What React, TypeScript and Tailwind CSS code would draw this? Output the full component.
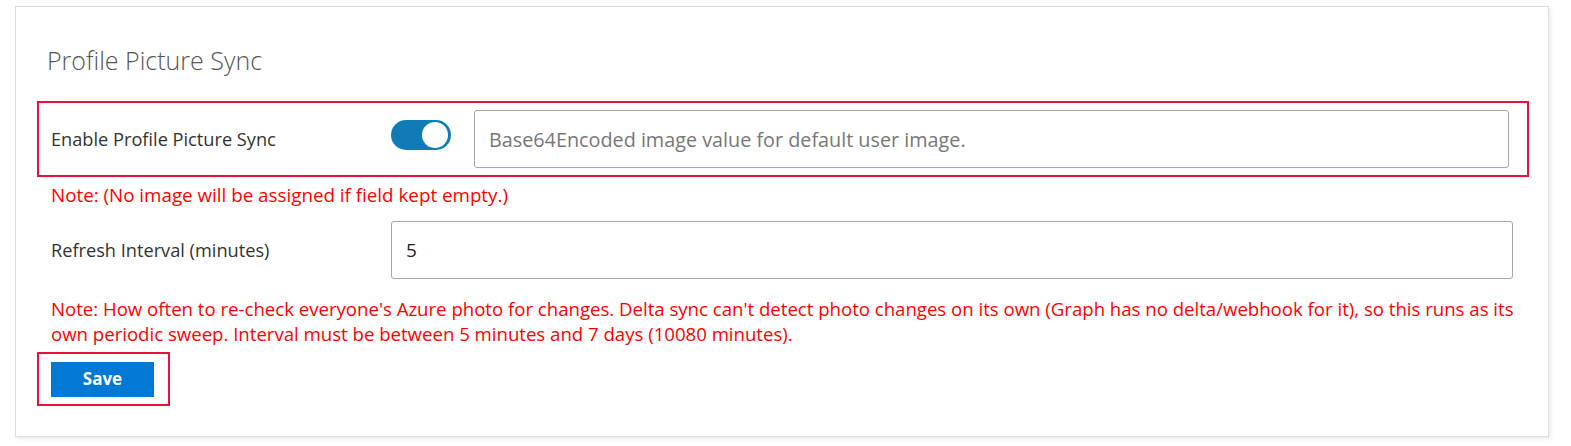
import { useState } from 'react'

const font = { fontFamily: '"Open Sans", "Noto Sans", sans-serif' }

export default function App() {
  const [enabled, setEnabled] = useState(true)
  const [image, setImage] = useState('')
  const [interval, setInterval] = useState('5')

  return (
    <div className="h-[446px] w-full bg-white pl-[15px] pt-[6px]" style={font}>
      <div className="h-[431px] w-[1534px] border border-[#dcdcdc] bg-white shadow-[2px_2px_3px_rgba(0,0,0,0.08)]">
        {/* 제목 */}
        <h2 className="ml-[31px] mt-[37px] text-[25px] font-light leading-[32px] text-[#555]">
          Profile Picture Sync
        </h2>

        {/* 사진 동기화 설정 */}
        <div className="ml-[21px] mt-[25px] flex h-[76px] w-[1492px] items-center border-2 border-[#e8113a] pl-[12px] pr-[18px]">
          <span className="w-[340px] text-[18.2px] leading-[24px] text-[#333]">Enable Profile Picture Sync</span>
          <button
            onClick={() => setEnabled(!enabled)}
            className={`relative mb-[9px] h-[30px] w-[60px] rounded-full ${enabled ? 'bg-[#0f7cb5]' : 'bg-[#ccc]'}`}
          >
            <span
              className={`absolute top-[2px] h-[26px] w-[26px] rounded-full bg-white ${enabled ? 'right-[3px]' : 'left-[3px]'}`}
            ></span>
          </button>
          <input
            value={image}
            onChange={(e) => setImage(e.target.value)}
            placeholder="Base64Encoded image value for default user image."
            className="ml-[23px] h-[58px] flex-1 rounded-[3px] border border-[#a6a6a6] px-[14px] text-[19.8px] text-[#333] outline-none placeholder:text-[#777]"
          />
        </div>
        <p className="ml-[35px] mt-[6px] text-[18.8px] leading-[25px] text-[#f00]">
          Note: (No image will be assigned if field kept empty.)
        </p>

        {/* 새로고침 간격 */}
        <div className="ml-[35px] mt-[13px] flex w-[1462px] items-center">
          <span className="w-[340px] text-[18.2px] leading-[24px] text-[#333]">Refresh Interval (minutes)</span>
          <input
            value={interval}
            onChange={(e) => setInterval(e.target.value)}
            className="h-[58px] flex-1 rounded-[3px] border border-[#a6a6a6] px-[14px] text-[19px] text-[#222] outline-none"
          />
        </div>
        <p className="ml-[35px] mt-[17px] w-[1480px] text-[18.6px] leading-[25px] text-[#f00]">
          Note: How often to re-check everyone's Azure photo for changes. Delta sync can't detect photo changes on its own
          (Graph has no delta/webhook for it), so this runs as its own periodic sweep. Interval must be between 5 minutes
          and 7 days (10080 minutes).
        </p>

        {/* 저장 버튼 */}
        <div className="ml-[21px] mt-[6px] flex h-[54px] w-[133px] items-center border-2 border-[#e8113a] pl-[12px]">
          <button className="h-[35px] w-[103px] bg-[#0078d4] text-[17px] font-bold text-white">Save</button>
        </div>
      </div>
    </div>
  )
}
